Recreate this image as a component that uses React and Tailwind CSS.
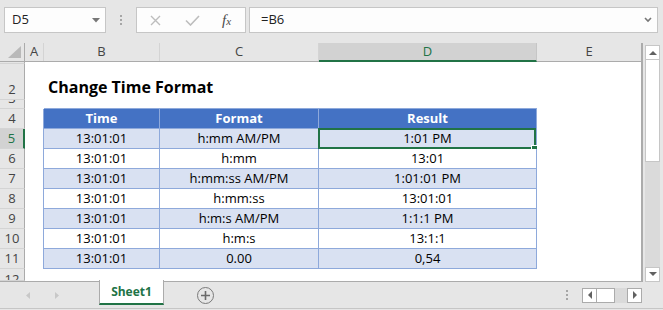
const TABLE = [
  ['13:01:01', 'h:mm AM/PM', '1:01 PM'],
  ['13:01:01', 'h:mm', '13:01'],
  ['13:01:01', 'h:mm:ss AM/PM', '1:01:01 PM'],
  ['13:01:01', 'h:mm:ss', '13:01:01'],
  ['13:01:01', 'h:m:s AM/PM', '1:1:1 PM'],
  ['13:01:01', 'h:m:s', '13:1:1'],
  ['13:01:01', '0.00', '0,54'],
];

const ROWS = [
  { n: 1, h: 'h-[2px]' },
  { n: 2, h: 'h-[36px]', title: true },
  { n: 3, h: 'h-[9px]', tableTop: true },
  { n: 4, h: 'h-[20px]', head: ['Time', 'Format', 'Result'] },
  ...TABLE.map((cells, i) => ({ n: 5 + i, h: 'h-[20px]', cells, band: i % 2 === 0 })),
  { n: 12, h: 'h-[12px]', clipTop: true },
];

const SELECTED_ROW = 5;

function RowHeader({ n, h, clipTop }) {
  const selected = n === SELECTED_ROW;
  return (
    <div
      className={`${h} w-[25px] shrink-0 overflow-hidden flex flex-col ${clipTop ? 'justify-start' : 'justify-end'} border-b border-b-[#D4D4D4] ${
        selected ? 'bg-[#D2D2D2] border-r-2 border-r-[#217346] text-[#217346]' : 'bg-[#E6E6E6] border-r border-r-[#ABABAB] text-[#444]'
      }`}
    >
      <div className="h-[20px] shrink-0 flex items-end justify-center pb-[3px] text-[13px] leading-none">{n}</div>
    </div>
  );
}

function ColHeader() {
  const cols = [
    ['A', 'w-[19px]'],
    ['B', 'w-[116px]'],
    ['C', 'w-[159px]'],
    ['D', 'w-[218px]'],
  ];
  return (
    <div className="flex h-[19px] shrink-0 border-b border-[#ABABAB] bg-[#E6E6E6] text-[13px] text-[#444]">
      <div className="w-[25px] shrink-0 border-r border-[#ABABAB] flex items-end justify-end pr-[3px] pb-[3px]">
        <svg width="13" height="12" viewBox="0 0 13 12">
          <path d="M13 0 L13 12 L0 12 Z" fill="#B9B9B9" />
        </svg>
      </div>
      {cols.map(([k, w]) =>
        k === 'D' ? (
          <div key={k} className={`${w} shrink-0 -mb-px border-b-2 border-[#217346] bg-[#D2D2D2] text-[#217346] border-r border-r-[#C6C6C6] flex items-center justify-center`}>
            {k}
          </div>
        ) : (
          <div key={k} className={`${w} shrink-0 border-r border-[#D4D4D4] flex items-center justify-center`}>
            {k}
          </div>
        )
      )}
      <div className="flex-1 flex items-center justify-center">E</div>
    </div>
  );
}

function SheetRow({ row }) {
  const inTable = row.head || row.cells;
  const cellBase = 'shrink-0 flex items-center justify-center border-r border-b border-[#8EA9DB] whitespace-nowrap';
  let b = null;
  let c = null;
  let d = null;
  if (row.head) {
    const cls = `${cellBase} bg-[#4472C4] text-white font-bold`;
    b = <div className={`w-[116px] ${cls}`}>{row.head[0]}</div>;
    c = <div className={`w-[159px] ${cls}`}>{row.head[1]}</div>;
    d = <div className={`w-[218px] ${cls}`}>{row.head[2]}</div>;
  } else if (row.cells) {
    const cls = `${cellBase} ${row.band ? 'bg-[#D9E1F2]' : 'bg-white'} text-black`;
    b = <div className={`w-[116px] ${cls}`}>{row.cells[0]}</div>;
    c = <div className={`w-[159px] ${cls}`}>{row.cells[1]}</div>;
    d = (
      <div className={`w-[218px] relative ${cls}`}>
        {row.cells[2]}
        {row.n === SELECTED_ROW && (
          <>
            <div className="absolute -left-px -top-px right-0 -bottom-px border-2 border-[#217346]" />
            <div className="absolute -right-[2px] -bottom-[4px] w-[7px] h-[7px] bg-[#217346] border border-white" />
          </>
        )}
      </div>
    );
  } else if (row.tableTop) {
    b = <div className="w-[116px] shrink-0 border-b border-[#8EA9DB]" />;
    c = <div className="w-[159px] shrink-0 border-b border-[#8EA9DB]" />;
    d = <div className="w-[218px] shrink-0 border-b border-[#8EA9DB]" />;
  } else {
    b = (
      <div className="w-[116px] shrink-0 flex items-end pl-[4px] pb-[5px] whitespace-nowrap overflow-visible">
        {row.title && <span className="text-[16px] font-bold leading-none text-black">Change Time Format</span>}
      </div>
    );
    c = <div className="w-[159px] shrink-0" />;
    d = <div className="w-[218px] shrink-0" />;
  }
  return (
    <div className={`flex ${row.h} shrink-0 text-[13px]`}>
      <RowHeader n={row.n} h={row.h} clipTop={row.clipTop} />
      <div className={`w-[19px] shrink-0 ${inTable ? 'border-r border-[#8EA9DB]' : ''}`} />
      {b}
      {c}
      {d}
      <div className="flex-1" />
    </div>
  );
}

function ScrollButton({ dir }) {
  return (
    <div className="h-[15px] w-[15px] shrink-0 bg-white border border-[#C6C6C6] flex items-center justify-center">
      <svg width="8" height="5" viewBox="0 0 8 5">
        {dir === 'up' ? <path d="M0 5 L4 1 L8 5 Z" fill="#616161" /> : <path d="M0 0 L8 0 L4 4 Z" fill="#616161" />}
      </svg>
    </div>
  );
}

function FormulaBar() {
  return (
    <div className="h-[43px] shrink-0 flex items-start pt-[7px] pl-[4px] pr-[5px] text-[13px] text-[#222]">
      <div className="w-[102px] h-[26px] bg-[#FDFDFD] border border-[#C6C6C6] flex items-center justify-between pl-[7px] pr-[5px]">
        <span>D5</span>
        <svg width="8" height="5" viewBox="0 0 8 5">
          <path d="M0 0 L8 0 L4 4.5 Z" fill="#777" />
        </svg>
      </div>
      <div className="w-[30px] h-[26px] flex flex-col items-center justify-center gap-[2px]">
        <span className="w-[2px] h-[2px] bg-[#A6A6A6]" />
        <span className="w-[2px] h-[2px] bg-[#A6A6A6]" />
        <span className="w-[2px] h-[2px] bg-[#A6A6A6]" />
      </div>
      <div className="w-[110px] h-[26px] bg-[#FDFDFD] border border-[#C6C6C6] flex items-center pl-[13px]">
        <svg width="11" height="11" viewBox="0 0 11 11">
          <path d="M1 1 L10 10 M10 1 L1 10" stroke="#BDBDBD" strokeWidth="1.4" />
        </svg>
        <svg className="ml-[24px]" width="15" height="11" viewBox="0 0 15 11">
          <path d="M1 5.5 L5.5 10 L14 1" stroke="#BDBDBD" strokeWidth="1.6" fill="none" />
        </svg>
        <span className="ml-[22px] font-['Liberation_Serif',serif] italic text-[15px] leading-none text-[#4A4A4A]">
          f<span className="text-[11px]">x</span>
        </span>
      </div>
      <div className="ml-[3px] flex-1 h-[26px] bg-[#FDFDFD] border border-[#C6C6C6] flex items-center justify-between pl-[11px] pr-[5px]">
        <span>=B6</span>
        <svg width="8" height="6" viewBox="0 0 8 6">
          <path d="M1 1 L4 4 L7 1" stroke="#777" strokeWidth="1.6" fill="none" />
        </svg>
      </div>
    </div>
  );
}

function TabBar() {
  return (
    <div className="h-[27px] shrink-0 border-b border-[#C6C6C6] flex items-center text-[#444]">
      <div className="w-[99px] shrink-0 flex items-center pl-[26px] gap-[25px]">
        <svg width="4" height="7" viewBox="0 0 4 7">
          <path d="M4 0 L4 7 L0 3.5 Z" fill="#C8C8C8" />
        </svg>
        <svg width="4" height="7" viewBox="0 0 4 7">
          <path d="M0 0 L0 7 L4 3.5 Z" fill="#C8C8C8" />
        </svg>
      </div>
      <div className="w-[65px] h-[25px] -mt-[2px] self-start shrink-0 bg-white border-x border-[#ABABAB] border-b-2 border-b-[#217346] flex items-center justify-center text-[12px] font-bold text-[#217346]">
        Sheet1
      </div>
      <div className="ml-[33px] w-[17px] h-[17px] rounded-full border-[1.5px] border-[#7A7A7A] flex items-center justify-center">
        <svg width="9" height="9" viewBox="0 0 9 9">
          <path d="M4.5 0 V9 M0 4.5 H9" stroke="#6A6A6A" strokeWidth="1.6" />
        </svg>
      </div>
      <div className="flex-1" />
      <div className="flex flex-col gap-[2px] mr-[14px]">
        <span className="w-[2px] h-[2px] bg-[#A6A6A6]" />
        <span className="w-[2px] h-[2px] bg-[#A6A6A6]" />
        <span className="w-[2px] h-[2px] bg-[#A6A6A6]" />
      </div>
      <div className="flex h-[15px] mr-[21px]">
        <div className="w-[15px] bg-white border border-[#ABABAB] flex items-center justify-center">
          <svg width="4" height="8" viewBox="0 0 4 8">
            <path d="M4 0 L4 8 L0 4 Z" fill="#616161" />
          </svg>
        </div>
        <div className="w-[18px] bg-white border-y border-r border-[#ABABAB]" />
        <div className="w-[12px] bg-[#DADADA]" />
        <div className="w-[15px] bg-white border border-[#ABABAB] flex items-center justify-center">
          <svg width="4" height="8" viewBox="0 0 4 8">
            <path d="M0 0 L0 8 L4 4 Z" fill="#616161" />
          </svg>
        </div>
      </div>
    </div>
  );
}

export default function App() {
  return (
    <div className="w-[663px] h-[310px] overflow-hidden bg-[#E6E6E6] flex flex-col font-['Open_Sans',sans-serif]">
      <FormulaBar />
      <div className="h-[239px] shrink-0 flex">
        <div className="w-[643px] shrink-0 flex flex-col bg-white border-r-2 border-b border-[#ABABAB] overflow-hidden">
          <ColHeader />
          {ROWS.map((row) => (
            <SheetRow key={row.n} row={row} />
          ))}
        </div>
        <div className="ml-[2px] mt-[2px] w-[15px] flex flex-col">
          <ScrollButton dir="up" />
          <div className="h-[102px] shrink-0 bg-white border-x border-b border-[#C6C6C6]" />
          <div className="flex-1 bg-[#DADADA]" />
          <ScrollButton dir="down" />
        </div>
      </div>
      <TabBar />
    </div>
  );
}
